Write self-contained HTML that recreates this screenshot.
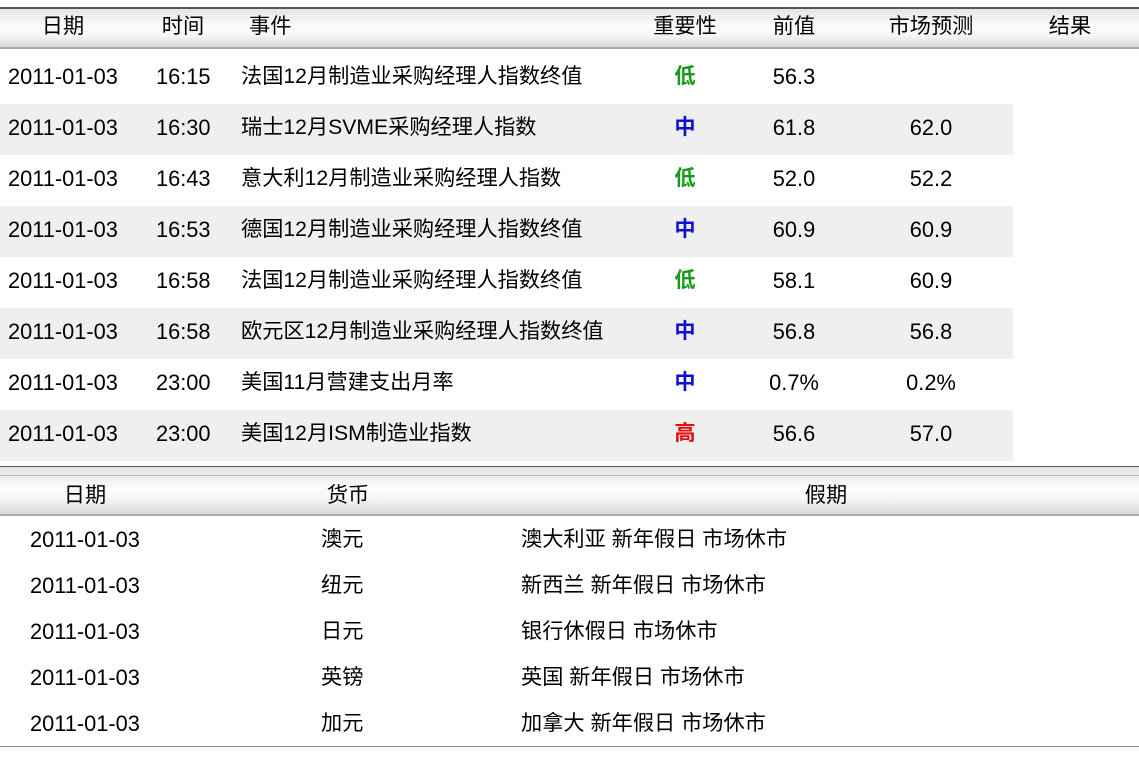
<!DOCTYPE html>
<html><head><meta charset="utf-8"><style>
body{margin:0;width:1139px;height:768px;background:#fff;position:relative;overflow:hidden;font-family:"Liberation Sans","Noto Sans CJK SC",sans-serif;font-size:21.2px;color:#000}
.hd{position:absolute;left:0;width:1139px;border-top:2px solid #555;border-bottom:2px solid #aaa;background:linear-gradient(#e4e4e4,#fbfbfb 45%,#f6f6f6 70%,#d8d8d8)}
.t{position:absolute;white-space:nowrap;line-height:24px}
.c{transform:translateX(-50%)}
.b{font-weight:bold}
.g{position:absolute;left:0;width:1013px;height:51px;background:#efefef}
.n{font-size:21.8px}
</style></head><body>
<div class="hd" style="top:7px;height:38px"></div>
<div class="t c" style="left:63px;top:15px">日期</div>
<div class="t c" style="left:183px;top:15px">时间</div>
<div class="t" style="left:249px;top:15px">事件</div>
<div class="t c" style="left:685px;top:15px">重要性</div>
<div class="t c" style="left:794px;top:15px">前值</div>
<div class="t c" style="left:931px;top:15px">市场预测</div>
<div class="t c" style="left:1070px;top:15px">结果</div>

<div class="g" style="top:104px"></div>
<div class="g" style="top:206px"></div>
<div class="g" style="top:308px"></div>
<div class="g" style="top:410px"></div>

<div class="t n" style="left:8px;top:65px">2011-01-03</div><div class="t n" style="left:156px;top:65px">16:15</div><div class="t" style="left:241px;top:65px">法国12月制造业采购经理人指数终值</div><div class="t c b" style="left:685px;top:65px;color:#1a9a1a">低</div><div class="t c n" style="left:794px;top:65px">56.3</div>
<div class="t n" style="left:8px;top:116px">2011-01-03</div><div class="t n" style="left:156px;top:116px">16:30</div><div class="t" style="left:241px;top:116px">瑞士12月SVME采购经理人指数</div><div class="t c b" style="left:685px;top:116px;color:#1010d0">中</div><div class="t c n" style="left:794px;top:116px">61.8</div><div class="t c n" style="left:931px;top:116px">62.0</div>
<div class="t n" style="left:8px;top:167px">2011-01-03</div><div class="t n" style="left:156px;top:167px">16:43</div><div class="t" style="left:241px;top:167px">意大利12月制造业采购经理人指数</div><div class="t c b" style="left:685px;top:167px;color:#1a9a1a">低</div><div class="t c n" style="left:794px;top:167px">52.0</div><div class="t c n" style="left:931px;top:167px">52.2</div>
<div class="t n" style="left:8px;top:218px">2011-01-03</div><div class="t n" style="left:156px;top:218px">16:53</div><div class="t" style="left:241px;top:218px">德国12月制造业采购经理人指数终值</div><div class="t c b" style="left:685px;top:218px;color:#1010d0">中</div><div class="t c n" style="left:794px;top:218px">60.9</div><div class="t c n" style="left:931px;top:218px">60.9</div>
<div class="t n" style="left:8px;top:269px">2011-01-03</div><div class="t n" style="left:156px;top:269px">16:58</div><div class="t" style="left:241px;top:269px">法国12月制造业采购经理人指数终值</div><div class="t c b" style="left:685px;top:269px;color:#1a9a1a">低</div><div class="t c n" style="left:794px;top:269px">58.1</div><div class="t c n" style="left:931px;top:269px">60.9</div>
<div class="t n" style="left:8px;top:320px">2011-01-03</div><div class="t n" style="left:156px;top:320px">16:58</div><div class="t" style="left:241px;top:320px">欧元区12月制造业采购经理人指数终值</div><div class="t c b" style="left:685px;top:320px;color:#1010d0">中</div><div class="t c n" style="left:794px;top:320px">56.8</div><div class="t c n" style="left:931px;top:320px">56.8</div>
<div class="t n" style="left:8px;top:371px">2011-01-03</div><div class="t n" style="left:156px;top:371px">23:00</div><div class="t" style="left:241px;top:371px">美国11月营建支出月率</div><div class="t c b" style="left:685px;top:371px;color:#1010d0">中</div><div class="t c n" style="left:794px;top:371px">0.7%</div><div class="t c n" style="left:931px;top:371px">0.2%</div>
<div class="t n" style="left:8px;top:422px">2011-01-03</div><div class="t n" style="left:156px;top:422px">23:00</div><div class="t" style="left:241px;top:422px">美国12月ISM制造业指数</div><div class="t c b" style="left:685px;top:422px;color:#e01010">高</div><div class="t c n" style="left:794px;top:422px">56.6</div><div class="t c n" style="left:931px;top:422px">57.0</div>

<div class="hd" style="top:466px;height:47px;border-top-width:1px;border-bottom-width:2px"></div>
<div style="position:absolute;left:0;top:475px;width:1139px;height:1px;background:#bbb"></div>
<div class="t c" style="left:85px;top:484px">日期</div>
<div class="t c" style="left:348px;top:484px">货币</div>
<div class="t c" style="left:826px;top:484px">假期</div>

<div class="t n" style="left:30px;top:528px">2011-01-03</div><div class="t" style="left:321px;top:528px">澳元</div><div class="t" style="left:521px;top:528px">澳大利亚 新年假日 市场休市</div>
<div class="t n" style="left:30px;top:574px">2011-01-03</div><div class="t" style="left:321px;top:574px">纽元</div><div class="t" style="left:521px;top:574px">新西兰 新年假日 市场休市</div>
<div class="t n" style="left:30px;top:620px">2011-01-03</div><div class="t" style="left:321px;top:620px">日元</div><div class="t" style="left:521px;top:620px">银行休假日 市场休市</div>
<div class="t n" style="left:30px;top:666px">2011-01-03</div><div class="t" style="left:321px;top:666px">英镑</div><div class="t" style="left:521px;top:666px">英国 新年假日 市场休市</div>
<div class="t n" style="left:30px;top:712px">2011-01-03</div><div class="t" style="left:321px;top:712px">加元</div><div class="t" style="left:521px;top:712px">加拿大 新年假日 市场休市</div>
<div style="position:absolute;left:0;top:746px;width:1139px;height:1px;background:#888"></div>
</body></html>
